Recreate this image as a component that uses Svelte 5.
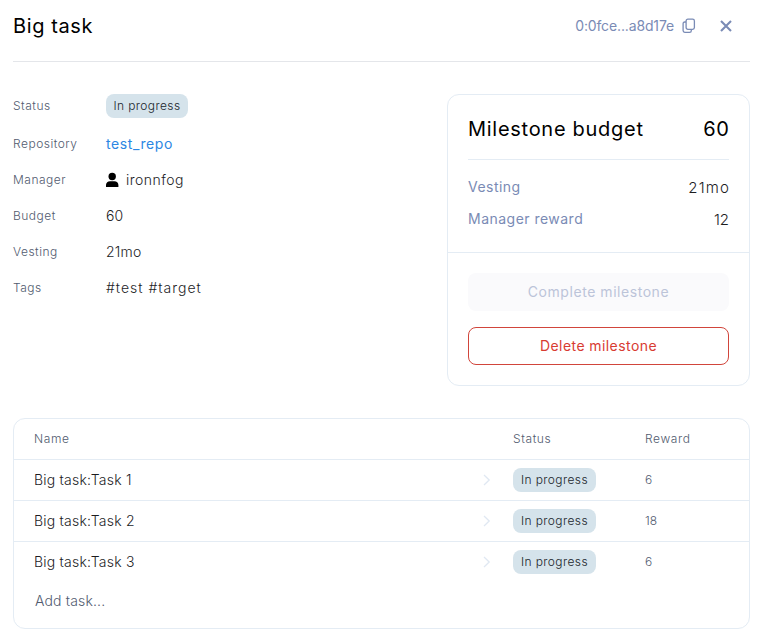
<script>
  const tasks = [
    { name: 'Big task:Task 1', reward: 6 },
    { name: 'Big task:Task 2', reward: 18 },
    { name: 'Big task:Task 3', reward: 6 }
  ];
</script>

<div class="page">
  <header>
    <h1>Big task</h1>
    <div class="tools">
      <span class="address">0:0fce...a8d17e</span>
      <svg class="copy" width="14" height="16" viewBox="0 0 14 16" fill="none" stroke="currentColor" stroke-width="1.3">
        <rect x="4.1" y="1.1" width="8.3" height="10.3" rx="1.8" />
        <path d="M4 4H2.8Q1.1 4 1.1 5.8V12.6Q1.1 14.4 2.8 14.4H7.6Q9.3 14.4 9.3 12.8V11.5" />
      </svg>
      <svg class="close" width="12" height="12" viewBox="0 0 12 12" fill="none" stroke="currentColor" stroke-width="2.1">
        <path d="M1 1L11 11M11 1L1 11" />
      </svg>
    </div>
  </header>

  <main>
    <dl>
      <div class="row first"><dt>Status</dt><dd><span class="badge">In progress</span></dd></div>
      <div class="row"><dt>Repository</dt><dd><a href="#repo">test_repo</a></dd></div>
      <div class="row">
        <dt>Manager</dt>
        <dd class="person">
          <svg width="14" height="16" viewBox="0 0 14 16" fill="currentColor">
            <circle cx="6.2" cy="4.5" r="3.7" />
            <path d="M0 15V13C0 10.7 1.8 9.2 4 9.2H8.4C10.6 9.2 12.4 10.7 12.4 13V15Z" />
          </svg>
          <span>ironnfog</span>
        </dd>
      </div>
      <div class="row"><dt>Budget</dt><dd class="amount">60</dd></div>
      <div class="row"><dt>Vesting</dt><dd class="term">21mo</dd></div>
      <div class="row"><dt>Tags</dt><dd class="tags">#test #target</dd></div>
    </dl>

    <section class="card">
      <div class="summary">
        <div class="total"><span>Milestone budget</span><span class="sum">60</span></div>
        <div class="line"><span class="key">Vesting</span><span class="value months">21mo</span></div>
        <div class="line"><span class="key">Manager reward</span><span class="value">12</span></div>
      </div>
      <div class="actions">
        <button class="complete" disabled>Complete milestone</button>
        <button class="delete">Delete milestone</button>
      </div>
    </section>
  </main>

  <section class="table">
    <div class="tr head"><span>Name</span><span></span><span>Status</span><span>Reward</span></div>
    {#each tasks as task}
      <div class="tr">
        <span class="name">{task.name}</span>
        <svg width="8" height="12" viewBox="0 0 8 12" fill="none" stroke="#e0e8f2" stroke-width="1.3">
          <path d="M1 1L6.2 6L1 11" />
        </svg>
        <span class="cell"><span class="badge">In progress</span></span>
        <span class="reward">{task.reward}</span>
      </div>
    {/each}
    <div class="add">Add task...</div>
  </section>
</div>

<style>
  :global(body) { margin: 0; background: #fff; }
  .page {
    box-sizing: border-box;
    width: 762px;
    height: 641px;
    padding: 0 12px 0 13px;
    font-family: Inter, "Open Sans", sans-serif;
    font-weight: 300;
    font-size: 14px;
    color: #1d1d1f;
    overflow: hidden;
  }
  span, dt, dd, a, button, h1, .add { white-space: nowrap; }
  header {
    display: flex;
    justify-content: space-between;
    align-items: center;
    height: 52px;
    padding-bottom: 9px;
    border-bottom: 1px solid #e4e6ea;
  }
  h1 { margin: 0; font-size: 20px; font-weight: 400; letter-spacing: 0.6px; color: #000; }
  .tools { display: flex; align-items: center; color: #7a8bb5; padding-right: 18px; }
  .address { font-weight: 400; letter-spacing: -0.14px; padding-bottom: 1px; }
  .copy { margin-left: 8px; }
  .close { margin-left: 24px; }
  main { display: flex; justify-content: space-between; padding-top: 32px; }
  dl { margin: 0; display: flex; flex-direction: column; gap: 12px; }
  .row { display: flex; align-items: center; height: 24px; }
  .first { margin-bottom: 2px; }
  dt { width: 93px; padding-bottom: 2px; font-size: 12px; letter-spacing: 0.5px; color: #525b6f; }
  dd { margin: 0; padding-bottom: 2px; letter-spacing: 0.5px; }
  .first dd { padding-bottom: 0; }
  .amount { letter-spacing: 0; }
  .term { letter-spacing: 0.2px; }
  .tags { letter-spacing: 1px; }
  a { color: #2b87e3; text-decoration: none; font-weight: 400; letter-spacing: 0.6px; }
  .person { display: flex; align-items: center; padding-bottom: 0; color: #000; gap: 6px; }
  .person span { color: #1d1d1f; padding-bottom: 2px; }
  .badge {
    box-sizing: border-box;
    display: flex;
    align-items: center;
    justify-content: center;
    width: 82px;
    height: 24px;
    padding-bottom: 2px;
    border-radius: 8px;
    background: #d5e3eb;
    color: #20262b;
    font-size: 12px;
    letter-spacing: 0.4px;
  }
  .card, .table { box-sizing: border-box; border: 1px solid #e4ecf4; border-radius: 12px; }
  .card { width: 303px; height: 292px; }
  .summary { height: 157px; padding: 0 20px; border-bottom: 1px solid #e4ecf4; }
  .total {
    display: flex;
    justify-content: space-between;
    align-items: center;
    height: 64px;
    margin-bottom: 12px;
    border-bottom: 1px solid #e4ecf4;
    font-size: 20px;
    font-weight: 400;
    letter-spacing: 0.72px;
    color: #000;
  }
  .total span { padding-top: 4px; }
  .total .sum { margin-right: -0.7px; }
  .line { display: flex; justify-content: space-between; align-items: center; height: 32px; }
  .key { color: #7a8bb5; font-weight: 400; letter-spacing: 0.48px; padding-bottom: 4px; }
  .value { font-size: 15px; padding-bottom: 2px; }
  .months { letter-spacing: 1.2px; margin-right: -1.2px; }
  .actions { display: flex; flex-direction: column; gap: 16px; padding: 20px; }
  button {
    box-sizing: border-box;
    height: 38px;
    padding: 0 0 2px;
    border: 0;
    border-radius: 8px;
    font: 400 14px Inter, "Open Sans", sans-serif;
  }
  .complete { background: #fafafc; color: #bcc4d9; letter-spacing: 0.55px; }
  .delete { background: #fff; border: 1px solid #d1453b; color: #d83b32; letter-spacing: 0.42px; }
  .table { height: 211px; margin-top: 32px; }
  .tr {
    display: grid;
    grid-template-columns: 449px 30px 132px 1fr;
    align-items: center;
    height: 40px;
    padding-left: 20px;
    border-bottom: 1px solid #e4ecf4;
  }
  .tr:nth-child(4) { border-bottom: 0; }
  .head { font-size: 12px; letter-spacing: 0.6px; color: #525b6f; }
  .head span { padding-bottom: 2px; }
  .name { padding-bottom: 2px; letter-spacing: 0.22px; }
  .cell .badge { width: 83px; }
  .reward { padding-bottom: 2px; font-size: 12px; color: #525b6f; }
  .add { padding: 10px 0 0 21px; letter-spacing: 0.15px; color: #525b6f; }
</style>
